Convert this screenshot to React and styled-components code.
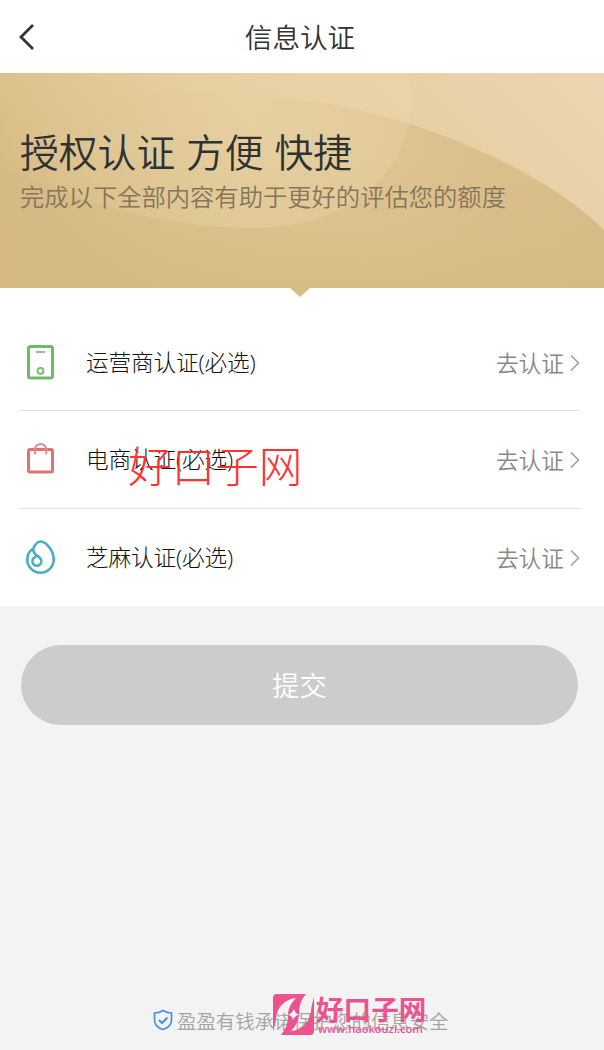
import React from 'react';
import styled, {createGlobalStyle} from 'styled-components';

const GlobalStyle = createGlobalStyle`
    *{
        box-sizing:border-box;
    }
    body{
        margin:0;
        background-color:#f3f3f3;
        font-family:"Noto Sans CJK SC", sans-serif;
        font-weight:350;
    }
`;

const Page = styled.div`
    display:flex;
    flex-direction:column;
    width:604px;
    height:1050px;
    overflow:hidden;
`;

const TopBar = styled.header`
    display:grid;
    grid-template-columns:50px 1fr 54px;
    align-items:center;
    height:73px;
    background-color:#fff;
    svg{
        display:block;
        margin-left:18px;
    }
`;

const Title = styled.h1`
    margin:0 0 2px;
    text-align:center;
    font-size:27.6px;
    font-weight:350;
    line-height:40px;
    color:#333;
`;

const Hero = styled.section`
    position:relative;
    height:215px;
    padding:55px 20px 0;
`;

const HeroArt = styled.svg`
    position:absolute;
    top:0;
    left:0;
`;

const Headline = styled.h2`
    position:relative;
    margin:0;
    font-size:38.8px;
    font-weight:350;
    line-height:44px;
    word-spacing:2.2px;
    white-space:nowrap;
    color:#2f3133;
`;

const Subtitle = styled.p`
    position:relative;
    margin:6px 0 0;
    font-size:24.3px;
    line-height:36px;
    white-space:nowrap;
    color:#857659;
`;

const List = styled.ul`
    height:318px;
    margin:0;
    padding:26px 24px 0 19px;
    list-style:none;
    background-color:#fff;
`;

const Row = styled.li`
    position:relative;
    display:flex;
    align-items:center;
    height:97px;
    & + &{
        border-top:1px solid #e2e2e2;
        height:98px;
        margin-top:-1px;
    }
    & + & + &{
        margin-top:0;
    }
`;

const IconBox = styled.span`
    display:flex;
    width:67px;
    padding-left:3px;
    padding-bottom:1px;
`;

const Label = styled.span`
    flex:1;
    padding-top:1px;
    font-family:"Open Sans", "Noto Sans CJK SC", sans-serif;
    font-size:22.7px;
    font-weight:300;
    letter-spacing:-0.2px;
    line-height:34px;
    color:#111;
`;

const Action = styled.span`
    display:flex;
    align-items:center;
    gap:6px;
    font-size:22.7px;
    line-height:34px;
    color:#888;
`;

const Stamp = styled.span`
    position:absolute;
    top:25px;
    left:109px;
    font-size:43.6px;
    line-height:56px;
    font-weight:300;
    color:#ff3232;
`;

const Submit = styled.button`
    width:557px;
    height:80px;
    margin:39px 0 0 21px;
    padding:0 0 2px;
    border:none;
    border-radius:40px;
    background-color:#ccc;
    font-family:inherit;
    font-size:27.4px;
    font-weight:350;
    color:#fff;
`;

const Footer = styled.footer`
    position:relative;
    display:flex;
    align-items:center;
    gap:4px;
    height:30px;
    margin-top:auto;
    margin-bottom:15px;
    padding-left:153px;
    font-size:19.4px;
    color:#a3a3a3;
`;

const Brand = styled.div`
    position:absolute;
    top:-11px;
    left:273px;
    display:flex;
    gap:2px;
    color:#ec5190;
`;

const BrandText = styled.div`
    display:flex;
    flex-direction:column;
`;

const BrandName = styled.span`
    font-size:27.6px;
    font-weight:700;
    line-height:28px;
`;

const BrandUrl = styled.span`
    font-family:"Open Sans", sans-serif;
    font-size:11.1px;
    font-weight:600;
    line-height:14px;
    padding-left:2px;
`;

const PhoneIcon = () => (
    <svg width="36" height="40" viewBox="0 0 36 40" fill="none" stroke="#70b86c">
        <rect x="6.5" y="4.5" width="24" height="31.5" rx="2" strokeWidth="3"/>
        <path d="M14 10h9" strokeWidth="1.6"/>
        <circle cx="18.5" cy="28.8" r="3" strokeWidth="1.8"/>
    </svg>
);

const BagIcon = () => (
    <svg width="36" height="40" viewBox="0 0 36 40" fill="none" stroke="#e07175">
        <rect x="6.5" y="10.5" width="24" height="22.5" rx="1.5" strokeWidth="3"/>
        <path d="M13 15.500V10.500a5.600 5.600 0 0 1 11.200 0v5" strokeWidth="2" stroke="#e58a8d"/>
    </svg>
);

const DropIcon = () => (
    <svg width="36" height="40" viewBox="0 0 36 40" fill="none" stroke="#4bacc3" strokeWidth="2.6">
        <path d="M11.300 11.500C13.500 6.500 16 4.500 18.500 4.500C24 4.500 31.700 13.500 31.700 22.500A13.200 13.200 0 0 1 5.300 22.500C5.300 17 8 13.500 11.300 11.500C11 15 12.500 17 15 18.500L18.300 21.300A4.500 4.500 0 1 1 11.500 21.300L15 18.200"/>
    </svg>
);

const BrandMark = () => (
    <svg width="41" height="41" viewBox="0 0 41 41">
        <path d="M0 38V4Q0 0 4 0H33C28 6 26 12 26 20C26 26 23 32 18 37C30 36 37 27 38 17C38 13 40 7 41 3V37Q41 41 37 41H8C13 35 15 29 15 21C15 15 18 9 23 4C11 5 4 14 3 24C3 28 1 34 0 38Z" fill="#ec5190"/>
        <path d="M21 15Q22 19.500 26 20.500Q22 21.500 20 26Q19 21.500 15 20.500Q19 19.500 21 15Z" fill="#f3f3f3"/>
    </svg>
);

const rows = [
    {title:'运营商认证(必选)', Icon:PhoneIcon},
    {title:'电商认证(必选)', Icon:BagIcon, stamp:'好口子网'},
    {title:'芝麻认证(必选)', Icon:DropIcon},
];

const App = () => (
    <Page>
        <GlobalStyle/>
        <TopBar>
            <svg width="18" height="28" viewBox="0 0 18 28" fill="none" stroke="#333" strokeWidth="2.8">
                <path d="M15 2L3 14L15 26"/>
            </svg>
            <Title>信息认证</Title>
        </TopBar>
        <Hero>
            <HeroArt width="604" height="225" viewBox="0 0 604 225">
                <defs>
                    <linearGradient id="base" gradientUnits="userSpaceOnUse" x1="0" y1="215" x2="400" y2="-185">
                        <stop offset="0" stopColor="#d0b17b"/>
                        <stop offset="0.25" stopColor="#dac08b"/>
                        <stop offset="0.55" stopColor="#e4cc9c"/>
                        <stop offset="1" stopColor="#ebd5b0"/>
                    </linearGradient>
                    <linearGradient id="hillFade" x1="0" y1="0" x2="1" y2="0">
                        <stop offset="0" stopColor="#d8bc85" stopOpacity="0"/>
                        <stop offset="0.35" stopColor="#d8bd87" stopOpacity="0.12"/>
                        <stop offset="0.6" stopColor="#d9be8a" stopOpacity="0.5"/>
                        <stop offset="0.8" stopColor="#d8bc89" stopOpacity="0.85"/>
                        <stop offset="1" stopColor="#d8bc89"/>
                    </linearGradient>
                    <linearGradient id="shade" x1="0" y1="0" x2="0" y2="1">
                        <stop offset="0.3" stopColor="#d8bc89" stopOpacity="0"/>
                        <stop offset="1" stopColor="#d6ba85" stopOpacity="0.75"/>
                    </linearGradient>
                    <linearGradient id="glow" x1="0" y1="0" x2="1" y2="0">
                        <stop offset="0" stopColor="#efdcb4" stopOpacity="0.02"/>
                        <stop offset="0.6" stopColor="#efdcb4" stopOpacity="0.32"/>
                        <stop offset="1" stopColor="#efdcb4" stopOpacity="0.22"/>
                    </linearGradient>
                </defs>
                <path d="M0 0H604V215H0Z" fill="url(#base)"/>
                <path d="M0 50C130 5 300 15 410 51C490 77 560 114 604 157V215H0Z" fill="url(#hillFade)"/>
                <path d="M0 50C130 5 300 15 410 51C490 77 560 114 604 157V215H0Z" fill="url(#shade)"/>
                <path d="M0 92C60 120 150 155 255 155C350 155 425 95 409 0H0Z" fill="url(#glow)"/>
                <path d="M289 214H311L300 224Z" fill="#d8bc86"/>
            </HeroArt>
            <Headline>授权认证 方便 快捷</Headline>
            <Subtitle>完成以下全部内容有助于更好的评估您的额度</Subtitle>
        </Hero>
        <List>
            {rows.map(({title, Icon, stamp}) =>
            <Row key={title}>
                <IconBox><Icon/></IconBox>
                <Label>{title}</Label>
                <Action>
                    去认证
                    <svg width="10" height="18" viewBox="0 0 10 18" fill="none" stroke="#a0a0a0" strokeWidth="1.6">
                        <path d="M1 1.500L8.500 9L1 16.500"/>
                    </svg>
                </Action>
                {stamp && <Stamp>{stamp}</Stamp>}
            </Row>)}
        </List>
        <Submit>提交</Submit>
        <Footer>
            <svg width="20" height="22" viewBox="0 0 20 22" fill="none" stroke="#4a90e2" strokeWidth="1.7">
                <path d="M10 1.500C7.500 3.200 4.500 4 1.500 4V11C1.500 16 5 19 10 20.500C15 19 18.500 16 18.500 11V4C15.500 4 12.500 3.200 10 1.500Z"/>
                <path d="M6 11L9 14L14.500 8.500" strokeWidth="2"/>
            </svg>
            盈盈有钱承诺保护您的信息安全
            <Brand>
                <BrandMark/>
                <BrandText>
                    <BrandName>好口子网</BrandName>
                    <BrandUrl>www.haokouzi.com</BrandUrl>
                </BrandText>
            </Brand>
        </Footer>
    </Page>
);

export default App;
